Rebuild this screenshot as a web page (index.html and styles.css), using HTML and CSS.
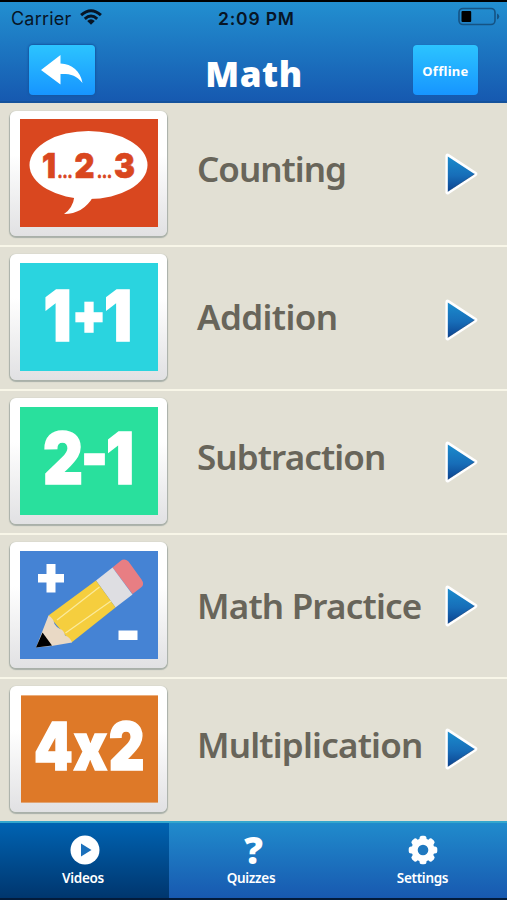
FILE: index.html
```html
<!DOCTYPE html>
<html lang="en">
<head>
<meta charset="utf-8">
<title>Math</title>
<link rel="stylesheet" href="styles.css">
</head>
<body>
<div class="app">
  <svg class="defs" width="0" height="0" aria-hidden="true">
    <defs>
      <linearGradient id="arrow-fill" x1="0" y1="0" x2="0" y2="1">
        <stop offset="0" stop-color="#1a8ccd"/><stop offset=".55" stop-color="#176db8"/><stop offset="1" stop-color="#0c438f"/>
      </linearGradient>
      <symbol id="arrow" viewBox="0 0 34 42">
        <path d="M2.700 2.800 30 21 2.700 39.200Z" fill="#fff" stroke="#fff" stroke-width="4.600" stroke-linejoin="round"/>
        <path d="M2.800 3.600 29.500 21 2.800 38.400Z" fill="url(#arrow-fill)"/>
        <path d="M2.800 38.400 29.500 21" stroke="#103f78" stroke-width="1" opacity=".6"/>
      </symbol>
    </defs>
  </svg>
  <header class="header">
    <div class="status">
      <span class="carrier">Carrier</span>
      <svg class="wifi" width="22" height="16" viewBox="0 0 22 16" fill="none" stroke="#071526" stroke-width="3">
        <path d="M1.1 6.1Q11-2.7 20.9 6.1M4.8 9.8Q11 4.2 17.2 9.8"/><path d="M7.2 12Q11 8.6 14.8 12L11 15.8Z" fill="#071526" stroke="none"/>
      </svg>
      <span class="clock">2:09 PM</span>
      <svg class="battery" width="42" height="20" viewBox="0 0 42 20">
        <rect x="1" y="1.5" width="36" height="16" rx="4" fill="none" stroke="#155384" stroke-width="1.6"/>
        <rect x="3.5" y="4" width="9.7" height="11" rx="1" fill="#000"/><path d="M39 6.5q2.3 1 2.3 3t-2.3 3z" fill="#155384"/>
      </svg>
    </div>
    <div class="titlebar">
      <button class="btn back" aria-label="Back">
        <svg width="44" height="30" viewBox="0 0 44 30"><path d="M1 15 20.5 0V8.500C32 9 40.500 16 42.500 28 36 20 31 18.800 20.500 19V29.500Z" fill="#fff"/></svg>
      </button>
      <h1 class="title">Math</h1>
      <button class="btn offline">Offline</button>
    </div>
  </header>
  <main class="list">
    <div class="row counting">
      <div class="card"><svg class="art" viewBox="0 0 138 108">
        <rect width="138" height="108" fill="#d9471f"/>
        <ellipse cx="68.500" cy="46" rx="59" ry="34" fill="#fff"/>
        <path d="M54.500 77Q53 89 44 95Q63 95 73 78Z" fill="#fff"/>
        <text class="heavy small" font-size="34" y="59"><tspan x="22" textLength="14" lengthAdjust="spacingAndGlyphs">1</tspan><tspan x="37.500" font-size="16" textLength="15" lengthAdjust="spacingAndGlyphs">...</tspan><tspan x="54.500" textLength="20" lengthAdjust="spacingAndGlyphs">2</tspan><tspan x="77" font-size="16" textLength="15" lengthAdjust="spacingAndGlyphs">...</tspan><tspan x="94" textLength="21" lengthAdjust="spacingAndGlyphs">3</tspan></text>
      </svg></div>
      <span class="label">Counting</span>
      <svg class="go" width="34" height="42"><use href="#arrow"/></svg>
    </div>
    <div class="row addition">
      <div class="card"><svg class="art" viewBox="0 0 138 108">
        <rect width="138" height="108" fill="#2ad4df"/>
        <text class="heavy" font-size="70"><tspan x="23.500" y="77.500" textLength="28" lengthAdjust="spacingAndGlyphs">1</tspan><tspan x="52" y="71" font-size="56" textLength="34" lengthAdjust="spacingAndGlyphs">+</tspan><tspan x="84" y="77.500" textLength="28" lengthAdjust="spacingAndGlyphs">1</tspan></text>
      </svg></div>
      <span class="label">Addition</span>
      <svg class="go" width="34" height="42"><use href="#arrow"/></svg>
    </div>
    <div class="row subtraction">
      <div class="card"><svg class="art" viewBox="0 0 138 108">
        <rect width="138" height="108" fill="#29e09d"/>
        <text class="heavy" font-size="71"><tspan x="23" y="76.500" textLength="40" lengthAdjust="spacingAndGlyphs">2</tspan><tspan x="61" y="73" textLength="27" lengthAdjust="spacingAndGlyphs">-</tspan><tspan x="86" y="76.500" textLength="28" lengthAdjust="spacingAndGlyphs">1</tspan></text>
      </svg></div>
      <span class="label">Subtraction</span>
      <svg class="go" width="34" height="42"><use href="#arrow"/></svg>
    </div>
    <div class="row practice">
      <div class="card"><svg class="art" viewBox="0 0 138 108">
        <rect width="138" height="108" fill="#4583d4"/>
        <path d="M26.500 13h9v10h8.500v8.500H35.500v10h-9v-10H18V23h8.500zM98.500 79.500h19v9.500h-19z" fill="#fff"/>
        <path d="M92.500 16.500 100.500 10Q104.500 7 108.500 10.500L121.500 28.500Q125 33.500 121 36.500L112.500 43Z" fill="#e87e83"/>
        <path d="M76 29.500 92.500 16.500 112.500 43.500 95.500 56.500Z" fill="#dedee2"/>
        <path d="M28.500 64.500 76 29.500 95.500 56.500 51.500 91.500Z" fill="#f5ce3e"/>
        <path d="M16 96.500 28.500 64.500Q33.500 67 34.500 73 37 77 40 78 44 79 45 84.500 50 86 52 91.500L31.500 95Z" fill="#e9d9c5"/>
        <path d="M22.500 81.500 32 94.500 16 96.500Z" fill="#000"/>
        <path d="M37 69 79.500 36M45.500 82 91 50" stroke="#fbea9a" stroke-width="1.300"/>
      </svg></div>
      <span class="label">Math Practice</span>
      <svg class="go" width="34" height="42"><use href="#arrow"/></svg>
    </div>
    <div class="row multiplication">
      <div class="card"><svg class="art" viewBox="0 0 138 108">
        <rect width="138" height="108" fill="#de7928"/>
        <text class="heavy" font-size="66" y="75.500"><tspan x="13" textLength="39" lengthAdjust="spacingAndGlyphs">4</tspan><tspan x="53" textLength="34" lengthAdjust="spacingAndGlyphs">x</tspan><tspan x="88.500" textLength="36" lengthAdjust="spacingAndGlyphs">2</tspan></text>
      </svg></div>
      <span class="label">Multiplication</span>
      <svg class="go" width="34" height="42"><use href="#arrow"/></svg>
    </div>
  </main>
  <nav class="tabs">
    <a class="tab active"><svg width="30" height="30" viewBox="0 0 30 30"><circle cx="15" cy="15" r="14.500" fill="#fff"/><path d="M11 8.500 21.500 15 11 21.500Z" fill="#1b70bb"/></svg><span class="videos">Videos</span></a>
    <a class="tab"><span class="question">?</span><span class="quizzes">Quizzes</span></a>
    <a class="tab"><svg width="30" height="30" viewBox="-15 -15 30 30"><g fill="#fff"><circle r="11.500"/><g id="teeth"><rect x="-3.500" y="-14.300" width="7" height="28.600" rx="2.500"/><rect x="-14.300" y="-3.500" width="28.600" height="7" rx="2.500"/></g><use href="#teeth" transform="rotate(45)"/></g><circle r="5.300" fill="#1f78bf"/></svg><span class="settings">Settings</span></a>
  </nav>
</div>
</body>
</html>
```
FILE: styles.css
```css
* { box-sizing: border-box; }
body { margin: 0; background: #000; font-family: "Noto Sans", "Open Sans", sans-serif; }
.app { width: 507px; height: 900px; display: flex; flex-direction: column; overflow: hidden; background: #e2e0d4; }
.defs { position: absolute; }
.header { height: 103px; flex: none; border-top: 2px solid #000; border-bottom: 2px solid #14529c; background: linear-gradient(#228fd0, #1659b0); }
.status { display: grid; grid-template-columns: 80px 138px 240px 42px; height: 34px; padding-top: 6px; font-family: Inter, "Liberation Sans", sans-serif; font-size: 18px; line-height: 22px; color: #071526; }
.carrier { padding-left: 11px; letter-spacing: .2px; }
.wifi { display: block; margin-top: 1px; }
.clock { font-weight: 600; font-size: 17.5px; letter-spacing: .8px; }
.battery { margin-top: -1px; }
.titlebar { display: flex; height: 66px; padding: 9px 29px 0 29px; justify-content: space-between; align-items: flex-start; }
.btn { height: 50px; padding: 0; display: flex; align-items: center; justify-content: center; border: 0; border-radius: 4px; background: linear-gradient(#2cc4ff, #1795ff); color: #fff; font: 700 13px "Noto Sans", sans-serif; box-shadow: 0 0 2px 1px #1557a2; }
.back { width: 66px; }
.offline { width: 65px; padding-top: 2px; letter-spacing: .3px; font-variant-ligatures: common-ligatures; box-shadow: 0 0 1px #1557a2; }
.title { margin: 4px 0 0; font: 900 35px/50px "Noto Sans", sans-serif; letter-spacing: .6px; color: #fff; }
.list { height: 718px; flex: none; }
.row { height: 144px; display: flex; align-items: flex-start; padding: 7px 28px 0 10px; border-bottom: 2px solid #f8f6e8; background: #e2e0d4; }
.row:last-child { height: 142px; border: 0; }
.card { width: 157px; height: 126px; flex: none; padding: 9px 9px 9px 10px; border-radius: 6px; background: linear-gradient(#fff 35%, #e1e1e3); box-shadow: 0 1px 1px 1px #a9b0a9; }
.art { display: block; width: 138px; height: 108px; }
.counting .card { height: 125px; margin-top: 1px; padding-top: 8px; }
.multiplication .art { margin-left: 1px; width: 137px; }
.heavy { font-family: Inter, sans-serif; font-weight: 900; fill: #fff; stroke: #fff; stroke-width: 1.6px; }
.small { fill: #d9471f; stroke: #d9471f; stroke-width: .6px; }
.label { flex: 1; margin-left: 30px; white-space: nowrap; font-weight: 600; font-size: 35px; line-height: 44px; letter-spacing: -.8px; color: #68655a; }
.go { flex: none; }
.counting .label { margin-top: 37px; letter-spacing: -1px; }
.addition .label { margin-top: 41px; letter-spacing: -.6px; }
.subtraction .label { margin-top: 37px; letter-spacing: -.9px; }
.practice .label { margin-top: 42px; }
.multiplication .label { margin-top: 37px; }
.counting .go { margin-top: 43px; }
.addition .go { margin-top: 45px; }
.subtraction .go { margin-top: 43px; }
.practice .go { margin-top: 43px; }
.multiplication .go { margin-top: 42px; }
.tabs { height: 79px; flex: none; display: grid; grid-template-columns: repeat(3, 1fr); border-top: 2px solid #34a7cd; border-bottom: 2px solid #021b3b; background: linear-gradient(#208bcc, #1859b0); }
.tab { display: flex; flex-direction: column; align-items: center; padding-top: 12px; color: #fff; font-weight: 600; font-size: 13.5px; line-height: 20px; letter-spacing: -.3px; }
.tab svg, .question { height: 30px; margin-bottom: 3px; }
.question { font: 900 37px/30px "Noto Sans", sans-serif; }
.videos { margin-right: 3px; }
.quizzes { margin-right: 5px; }
.active { background: linear-gradient(#0063b2, #00366e); }
```
